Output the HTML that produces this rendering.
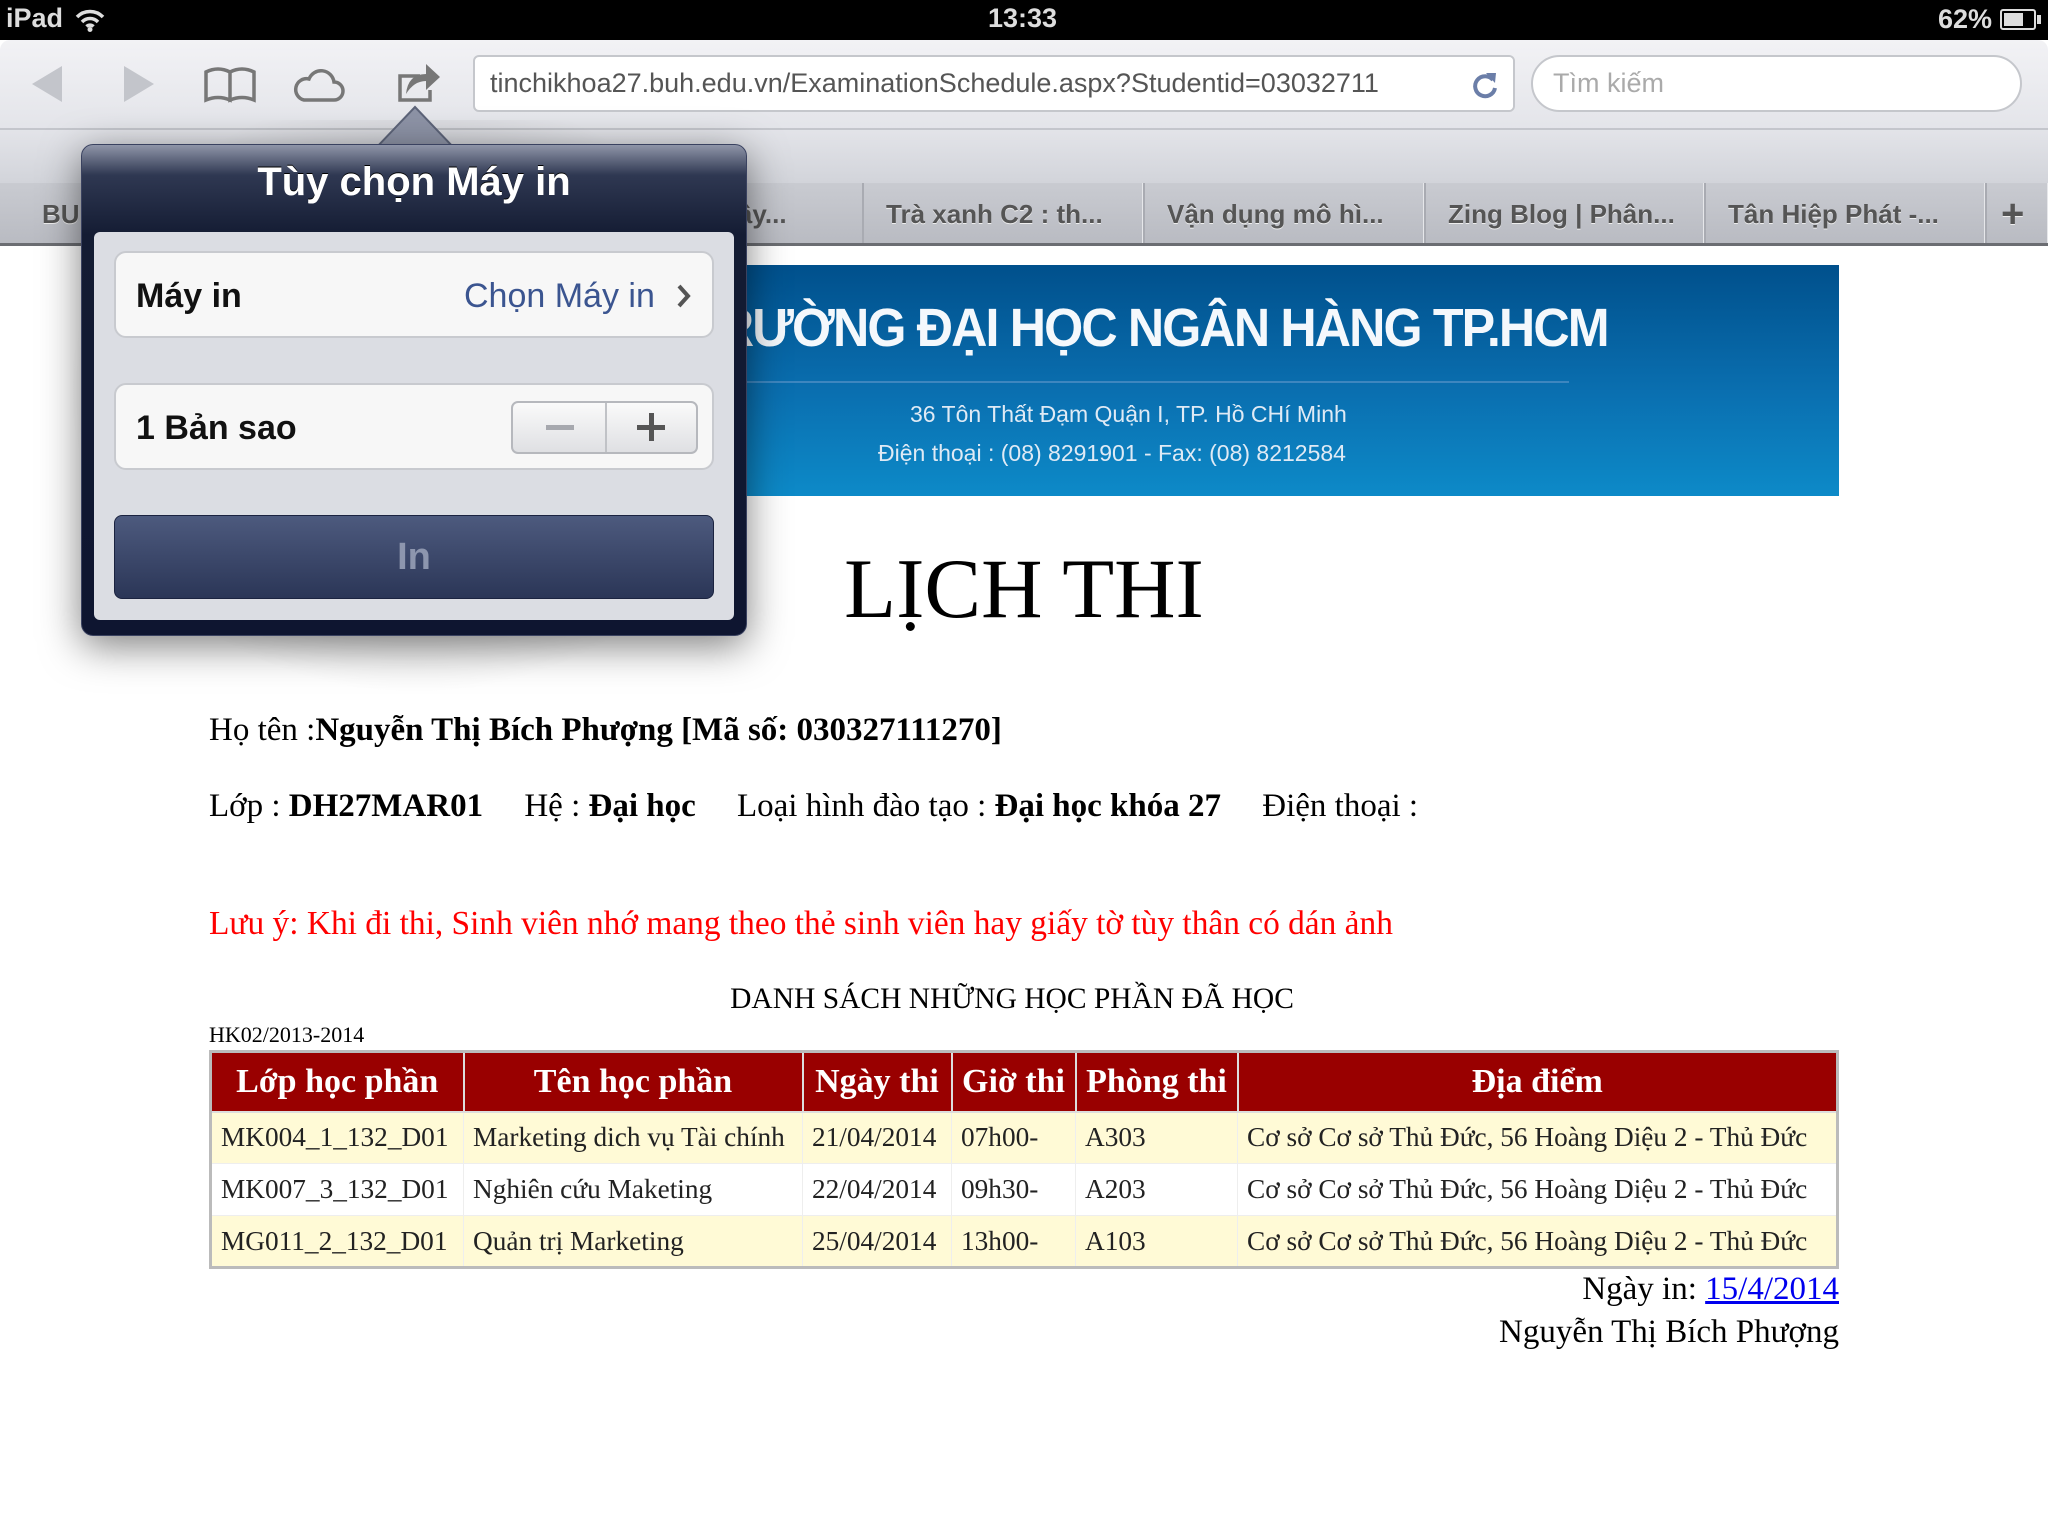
<!DOCTYPE html>
<html><head><meta charset="utf-8"><style>
*{margin:0;padding:0;box-sizing:border-box}
body{width:2048px;height:1536px;position:relative;overflow:hidden;background:#fff;font-family:"Liberation Serif",serif}
.a{position:absolute;white-space:nowrap}
.sb{left:0;top:0;width:2048px;height:40px;background:#000;color:#ddd;font:bold 27px "Liberation Sans",sans-serif}
.tb{left:0;top:40px;width:2048px;height:143px;background:linear-gradient(#f2f2f5,#e4e5ea 60%,#d2d4da);border-top-left-radius:10px;border-top-right-radius:10px}
.tabs{left:0;top:183px;width:2048px;height:63px;background:linear-gradient(#c9cbd1,#b9bbc2);border-bottom:3px solid #6b6d72}
.tab{position:absolute;top:0;height:60px;border-left:2px solid #a9abb2;border-right:1px solid #e6e7ea;font:bold 26px "Liberation Sans",sans-serif;color:#555;line-height:62px;padding-left:22px;text-shadow:0 1px 0 #eee}
.f{font:27px "Liberation Sans",sans-serif}
table{border-collapse:collapse;position:absolute;left:209px;top:1050px;width:1630px;font:27.3px "Liberation Serif",serif;color:#222;border:3px solid #bbb}
th{background:#990000;color:#fff;font-size:34px;height:60px;border:2px solid #ddd;padding:0 8px}
td{height:52px;padding:0 9px;border:1px solid #eee;white-space:nowrap}
tr.y td{background:#fffad6}
</style></head><body>
<div class="a sb"><span class="a" style="left:6px;top:3px">iPad</span>
<svg class="a" style="left:74px;top:8px" width="32" height="24" viewBox="0 0 32 24"><path d="M3 9a18 18 0 0 1 26 0M8 14a11 11 0 0 1 16 0M12.5 18.5a5 5 0 0 1 7 0" stroke="#ddd" stroke-width="3.5" fill="none"/><circle cx="16" cy="21.5" r="2.5" fill="#ddd"/></svg>
<span class="a" style="left:988px;top:3px">13:33</span>
<span class="a" style="left:1938px;top:4px">62%</span>
<div class="a" style="left:2000px;top:9px;width:36px;height:21px;border:2px solid #ddd;border-radius:3px"><div style="margin:2px;width:19px;height:13px;background:#ddd"></div></div>
<div class="a" style="left:2037px;top:15px;width:4px;height:9px;background:#ddd"></div>
</div>
<div class="a tb"></div>
<div class="a" style="left:0;top:128px;width:2048px;height:2px;background:#c4c6cc"></div>
<svg class="a" style="left:28px;top:58px" width="420" height="48" viewBox="0 0 420 48">
<path d="M4 26L34 8V44Z" fill="#c3c5cb"/><path d="M126 26L96 8V44Z" fill="#c3c5cb"/>
<path d="M178 14q12-6 24 0v28q-12-5-24 0zM202 14q12-6 24 0v28q-12-5-24 0z" stroke="#777" stroke-width="3.5" fill="none"/>
<path d="M276 42h30a9 9 0 0 0 0-18a13 13 0 0 0-25-3a9 9 0 0 0-5 21z" stroke="#777" stroke-width="3.5" fill="none"/>
<path d="M392 18h-20v24h30v-10" stroke="#777" stroke-width="3.5" fill="none"/><path d="M378 36q2-20 20-20v-10l14 13-14 13v-9q-12 0-20 13z" fill="#777"/>
</svg>
<div class="a" style="left:473px;top:55px;width:1042px;height:57px;background:#fff;border:2px solid #c5c7cc;border-radius:6px;overflow:hidden">
<span class="a f" style="left:15px;top:11px;color:#555">tinchikhoa27.buh.edu.vn/ExaminationSchedule.aspx?Studentid=03032711</span>
<div class="a" style="right:0;top:0;width:100px;height:57px;background:linear-gradient(90deg,rgba(255,255,255,0),#fff 50%)"></div>
<svg class="a" style="right:14px;top:13px" width="28" height="30" viewBox="0 0 28 30"><path d="M22 10A10 10 0 1 0 24 18" stroke="#6b7ea8" stroke-width="4" fill="none"/><path d="M15 3l10 0-1 10z" fill="#6b7ea8"/></svg>
</div>
<div class="a" style="left:1531px;top:55px;width:491px;height:57px;background:#fff;border:2px solid #c5c7cc;border-radius:29px">
<span class="a f" style="left:20px;top:11px;color:#aaa">Tìm kiếm</span></div>
<div class="a tabs">
<div class="tab" style="left:20px;width:842px;border:none">BUH Portal - Ho...</div>
<div class="a" style="left:605px;top:0;font:bold 26px 'Liberation Sans',sans-serif;color:#555;line-height:62px">Công tác xây...</div>
<div class="tab" style="left:862px;width:281px">Trà xanh C2 : th...</div>
<div class="tab" style="left:1143px;width:281px">Vận dụng mô hì...</div>
<div class="tab" style="left:1424px;width:280px">Zing Blog | Phân...</div>
<div class="tab" style="left:1704px;width:281px">Tân Hiệp Phát -...</div>
<div class="tab" style="left:1985px;width:63px;font-size:40px;padding-left:14px">+</div>
</div>
<!-- banner -->
<div class="a" style="left:209px;top:265px;width:1630px;height:231px;background:linear-gradient(#00508c,#0a6fb0 55%,#0d8ac8);overflow:hidden">
<span class="a" style="left:480px;top:32px;color:#f4f8fc;font:bold 54px 'Liberation Sans',sans-serif;letter-spacing:-2px;transform:scaleX(.93);transform-origin:left">TRƯỜNG ĐẠI HỌC NGÂN HÀNG TP.HCM</span>
<div class="a" style="left:520px;top:116px;width:840px;height:2px;background:#3d86bf"></div>
<span class="a" style="left:701px;top:136px;color:#dfeaf5;font:23px 'Liberation Sans',sans-serif">36 Tôn Thất Đạm Quận I, TP. Hồ CHí Minh</span>
<span class="a" style="left:669px;top:175px;color:#dfeaf5;font:23px 'Liberation Sans',sans-serif">Điện thoại :  (08) 8291901 - Fax: (08) 8212584</span>
</div>
<div class="a" style="left:0;top:540px;width:2048px;text-align:center;font-size:85px;color:#000">LỊCH THI</div>
<div class="a" style="left:209px;top:712px;font-size:33px">Họ tên :<b>Nguyễn Thị Bích Phượng [Mã số: 030327111270]</b></div>
<div class="a" style="left:209px;top:788px;font-size:33px">Lớp : <b>DH27MAR01</b>&nbsp;&nbsp;&nbsp;&nbsp; Hệ : <b>Đại học</b>&nbsp;&nbsp;&nbsp;&nbsp; Loại hình đào tạo : <b>Đại học khóa 27</b>&nbsp;&nbsp;&nbsp;&nbsp; Điện thoại :</div>
<div class="a" style="left:209px;top:905px;font-size:33.4px;color:#f00">Lưu ý: Khi đi thi, Sinh viên nhớ mang theo thẻ sinh viên hay giấy tờ tùy thân có dán ảnh</div>
<div class="a" style="left:0;top:983px;width:2048px;text-align:center;font-size:29.5px;padding-right:24px">DANH SÁCH NHỮNG HỌC PHẦN ĐÃ HỌC</div>
<div class="a" style="left:209px;top:1022px;font-size:22px">HK02/2013-2014</div>
<table>
<tr><th style="width:253px">Lớp học phần</th><th style="width:339px">Tên học phần</th><th style="width:149px">Ngày thi</th><th style="width:124px">Giờ thi</th><th style="width:162px">Phòng thi</th><th>Địa điểm</th></tr>
<tr class="y"><td>MK004_1_132_D01</td><td>Marketing dich vụ Tài chính</td><td>21/04/2014</td><td>07h00-</td><td>A303</td><td>Cơ sở Cơ sở Thủ Đức, 56 Hoàng Diệu 2 - Thủ Đức</td></tr>
<tr><td>MK007_3_132_D01</td><td>Nghiên cứu Maketing</td><td>22/04/2014</td><td>09h30-</td><td>A203</td><td>Cơ sở Cơ sở Thủ Đức, 56 Hoàng Diệu 2 - Thủ Đức</td></tr>
<tr class="y"><td>MG011_2_132_D01</td><td>Quản trị Marketing</td><td>25/04/2014</td><td>13h00-</td><td>A103</td><td>Cơ sở Cơ sở Thủ Đức, 56 Hoàng Diệu 2 - Thủ Đức</td></tr>
</table>
<div class="a" style="right:209px;top:1271px;font-size:33px">Ngày in: <span style="color:#00e;text-decoration:underline">15/4/2014</span></div>
<div class="a" style="right:209px;top:1314px;font-size:33px">Nguyễn Thị Bích Phượng</div>
<!-- popover -->
<div class="a" style="left:40px;top:120px;width:750px;height:600px;background:radial-gradient(ellipse at 50% 45%,rgba(0,0,0,.35),rgba(0,0,0,0) 65%)"></div>
<svg class="a" style="left:375px;top:105px" width="80" height="44" viewBox="0 0 80 44"><path d="M0 44L40 2L80 44Z" fill="#8d93a6" stroke="#5d6479" stroke-width="2"/></svg>
<div class="a" style="left:81px;top:144px;width:666px;height:492px;border-radius:12px;background:linear-gradient(#8f95a8,#2f3852 30px,#141c33 90px,#0e1530);box-shadow:0 10px 40px rgba(0,0,0,.5);border:1px solid #3a4260"></div>
<div class="a" style="left:81px;top:160px;width:666px;text-align:center;color:#fff;font:bold 40px 'Liberation Sans',sans-serif;text-shadow:0 -1px 0 #000">Tùy chọn Máy in</div>
<div class="a" style="left:94px;top:232px;width:640px;height:388px;background:#dbdde3;border-radius:6px"></div>
<div class="a" style="left:114px;top:251px;width:600px;height:87px;background:#f7f7f7;border:2px solid #c8cacf;border-radius:12px">
<span class="a" style="left:20px;top:24px;font:bold 34px 'Liberation Sans',sans-serif;color:#111">Máy in</span>
<span class="a" style="left:348px;top:24px;font:34px 'Liberation Sans',sans-serif;color:#3b5590">Chọn Máy in</span>
<svg class="a" style="left:560px;top:30px" width="16" height="26" viewBox="0 0 16 26"><path d="M3 3l9 10-9 10" stroke="#555" stroke-width="4" fill="none"/></svg></div>
<div class="a" style="left:114px;top:383px;width:600px;height:87px;background:#f7f7f7;border:2px solid #c8cacf;border-radius:12px">
<span class="a" style="left:20px;top:24px;font:bold 34px 'Liberation Sans',sans-serif;color:#111">1 Bản sao</span>
<div class="a" style="left:395px;top:16px;width:187px;height:53px;border:2px solid #b6b8bd;border-radius:7px;background:linear-gradient(#fafafa,#dfe0e3)">
<div class="a" style="left:92px;top:0;width:2px;height:49px;background:#c0c2c6"></div>
<div class="a" style="left:33px;top:22px;width:28px;height:5px;background:#a6a8ae"></div>
<div class="a" style="left:124px;top:22px;width:28px;height:5px;background:#555"></div>
<div class="a" style="left:136px;top:10px;width:5px;height:28px;background:#555"></div></div></div>
<div class="a" style="left:114px;top:515px;width:600px;height:84px;border-radius:8px;background:linear-gradient(#4d5a7e,#2b3657);border:1px solid #1b2340;text-align:center;font:bold 38px 'Liberation Sans',sans-serif;color:#8d96ae;line-height:82px">In</div>
</body></html>
